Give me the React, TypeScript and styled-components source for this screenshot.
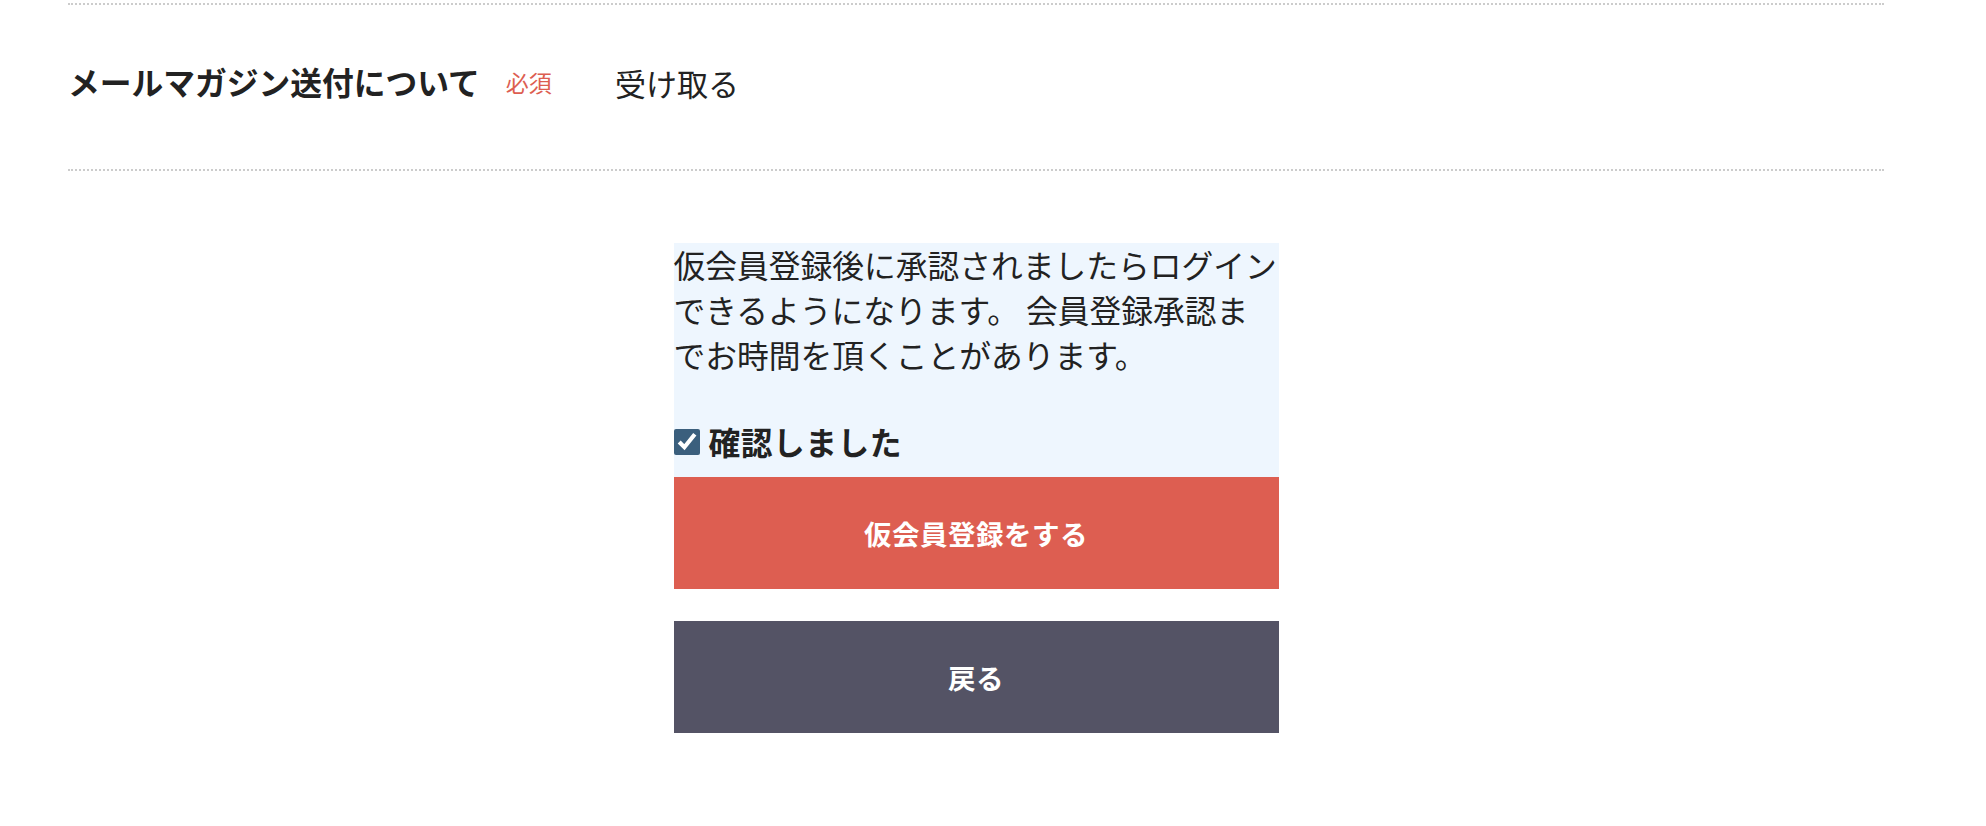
import styled, { createGlobalStyle } from "styled-components";

const GlobalStyle = createGlobalStyle`
    html, body {
        margin: 0;
        padding: 0;
        background: #fff;
    }
    body {
        font-family: "Noto Sans CJK JP", "Noto Sans", sans-serif;
        color: #222;
    }
`

const Page = styled.div`
    padding: 3px 102px 90px 68px;
`

const FieldRow = styled.div`
    display: flex;
    align-items: center;
    box-sizing: border-box;
    height: 168px;
    padding-bottom: 10px;
    border-top: 2px dotted #ccc;
    border-bottom: 2px dotted #ccc;
`

const FieldLabel = styled.div`
    width: 547px;
    display: flex;
    align-items: center;
    gap: 26px;
`

const LabelText = styled.span`
    font-size: 31.75px;
    font-weight: 700;
    line-height: 1;
`

const Required = styled.span`
    font-size: 23px;
    color: #dd5e51;
    line-height: 1;
`

const FieldValue = styled.span`
    font-size: 31px;
    line-height: 1;
`

const Confirm = styled.div`
    width: 605px;
    margin: 72px auto 0;
    display: flex;
    flex-direction: column;
`

const Notice = styled.div`
    background: #eef6fe;
    padding: 0 0 12px;
`

const NoticeText = styled.p`
    margin: -1px 0 0;
    font-size: 31.75px;
    line-height: 45px;
`

const Agree = styled.label`
    display: flex;
    align-items: center;
    gap: 9px;
    margin-top: 43px;
    padding-bottom: 2px;
    font-size: 31.75px;
    font-weight: 700;
    line-height: 43px;
    letter-spacing: 0.5px;
`

const CheckBox = styled.input`
    width: 26px;
    height: 26px;
    margin: 0;
    accent-color: #3b5f7d;
`

const Button = styled.button<{ $kind: "primary" | "back" }>`
    width: 100%;
    height: 112px;
    border: none;
    margin-top: ${(p) => (p.$kind === "back" ? "32px" : "0")};
    background: ${(p) => (p.$kind === "primary" ? "#dd5e51" : "#545365")};
    color: #fff;
    font-family: "Noto Sans CJK JP", "Noto Sans", sans-serif;
    font-size: 27.5px;
    font-weight: 700;
    letter-spacing: 0.5px;
    padding-bottom: 2px;
    cursor: pointer;
`

export default function App() {
    return (
        <Page>
            <GlobalStyle />
            <FieldRow>
                <FieldLabel>
                    <LabelText>メールマガジン送付について</LabelText>
                    <Required>必須</Required>
                </FieldLabel>
                <FieldValue>受け取る</FieldValue>
            </FieldRow>
            <Confirm>
                <Notice>
                    <NoticeText>
                        仮会員登録後に承認されましたらログインできるようになります。 会員登録承認までお時間を頂くことがあります。
                    </NoticeText>
                    <Agree>
                        <CheckBox type="checkbox" defaultChecked />
                        確認しました
                    </Agree>
                </Notice>
                <Button $kind="primary">仮会員登録をする</Button>
                <Button $kind="back">戻る</Button>
            </Confirm>
        </Page>
    )
}
